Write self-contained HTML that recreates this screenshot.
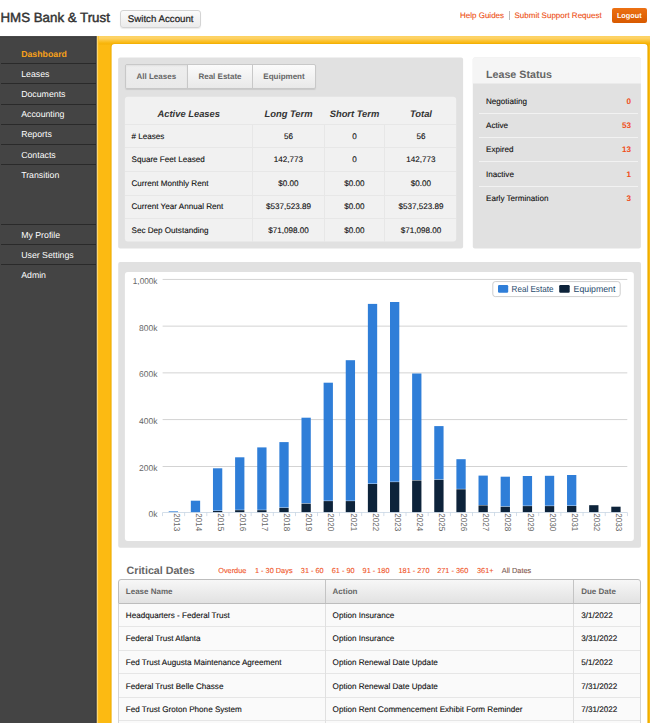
<!DOCTYPE html>
<html><head><meta charset="utf-8">
<style>
*{box-sizing:border-box;margin:0;padding:0}
html,body{width:650px;height:723px;overflow:hidden;background:#fff}
body{font-family:"Liberation Sans",sans-serif;font-size:8.1px;color:#111;position:relative;text-rendering:geometricPrecision}
.abs{position:absolute}
#title{left:0.5px;top:7.8px;font-size:13.3px;line-height:20px;color:#333;white-space:nowrap;-webkit-text-stroke:0.45px #333}
#switch{left:120px;top:10px;width:81.3px;height:18px;overflow:hidden;border:1px solid #d4d4d4;border-radius:3px;background:linear-gradient(#fbfbfb,#ebebeb);font-size:9.7px;line-height:17.8px;text-align:center;color:#222;-webkit-text-stroke:0.2px #222;box-shadow:0 1px 1px rgba(0,0,0,.08)}
.toplink{top:9.8px;line-height:12px;font-size:8px;color:#ee4f14;white-space:nowrap;-webkit-text-stroke:0.12px #ee4f14}
#logout{left:611.5px;top:8px;width:35.5px;height:14.5px;border-radius:2px;background:linear-gradient(#ec7013,#d85a00);color:#fff;font-weight:bold;font-size:7.3px;line-height:16.2px;text-align:center;overflow:hidden}
#side{left:0;top:36.4px;width:97px;height:687px;background:#444;border-right:1px solid #383838;border-top:1px solid #3a3a3a}
#yellow{left:97px;top:36px;width:553px;height:687px;background:#fcba12}
#ytop{left:97px;top:36px;width:553px;height:8.5px;background:linear-gradient(#fdd66c,#fdd062 30%,#fcc63c 50%,#f9b810 80%,#f5b005)}
#yleft{left:97px;top:36px;width:2px;height:687px;background:linear-gradient(90deg,#fdd56a,#fcc12c)}

.nav{left:0;width:97px;height:20.2px;line-height:20.2px;padding-left:21.2px;font-size:8.75px;color:#fff}
.nl{left:1px;width:95px;height:1px;background:#2a2a2a}
.nav.on{color:#f7a11a;font-weight:bold}
.gbox{background:#e1e1e1;border-radius:2px}
#tabs{left:125.3px;top:64px;width:190.4px;height:24.5px;border:1px solid #c8c8c8;border-radius:2px;background:linear-gradient(#fbfbfb,#e9e9e9);box-shadow:0 1px 1px rgba(0,0,0,.1)}
.tab{top:64.9px;height:24px;line-height:24px;font-size:8px;font-weight:bold;color:#666;text-align:center;white-space:nowrap}
.tdiv{top:65px;width:1px;height:22.5px;background:#c8c8c8}
#ltab{left:125px;top:97px;width:331px;height:145px;background:#f1f1f1;border-radius:3px}
.lh{top:97px;height:28px;line-height:33px;font-size:9.4px;font-weight:bold;font-style:italic;color:#333;text-align:center;white-space:nowrap}
.lr{height:23.4px;line-height:23.4px;white-space:nowrap;color:#111;font-size:8.1px;-webkit-text-stroke:0.12px #111}
.c{text-align:center}
.hl{left:125px;width:331px;height:1px;background:#e7e7e7}
.vl{top:125px;width:1px;height:116.5px;background:#e7e7e7}
#lshead{left:473px;top:57.5px;width:168px;height:26px;background:#f5f5f5;border-radius:2px 2px 0 0}
#lstitle{left:486px;top:64.8px;line-height:20px;font-size:10.7px;font-weight:bold;color:#666;white-space:nowrap}
.sl{left:486px;height:24.3px;line-height:24.3px;white-space:nowrap;font-size:8.1px;color:#111;-webkit-text-stroke:0.12px #111}
.sn{left:600px;width:31px;text-align:right;height:24.3px;line-height:24.3px;font-weight:bold;color:#f04e1a;font-size:8.1px}
.sh{left:479px;width:158.5px;height:1px;background:#f2f2f2}
#chartw{left:125px;top:272px;width:508.8px;height:269px;background:#fff;border-radius:3px}
#cdt{left:126.5px;top:561px;line-height:21px;font-size:10.7px;font-weight:bold;color:#666;white-space:nowrap}
.fl{top:564.5px;line-height:12px;font-size:7.35px;color:#f0531f;white-space:nowrap;-webkit-text-stroke:0.1px #f0531f}
#cdh{left:118px;top:579px;width:523px;height:24.5px;border:1px solid #bdbdbd;border-radius:3px 3px 0 0;background:linear-gradient(#f7f7f7,#e2e2e2)}
.ch{top:579.9px;height:24.5px;line-height:24.5px;font-size:8px;font-weight:bold;color:#666;white-space:nowrap}
#cdb{left:118px;top:603.5px;width:523px;height:125px;background:#fafafa;border-left:1px solid #d4d4d4;border-right:1px solid #d4d4d4}
.cr{height:23.55px;line-height:23.55px;white-space:nowrap;font-size:8.1px;color:#111;-webkit-text-stroke:0.12px #111}
.chl{left:119px;width:521px;height:1px;background:#e6e6e6}
.cvl{top:603.5px;width:1px;height:125px;background:#e0e0e0}
</style></head><body>
<div class="abs" id="title">HMS Bank &amp; Trust</div>
<div class="abs" id="switch">Switch Account</div>
<div class="abs toplink" style="left:460px">Help Guides</div>
<div class="abs" style="left:509px;top:11px;width:1px;height:9px;background:#bbb"></div>
<div class="abs toplink" style="left:514.5px">Submit Support Request</div>
<div class="abs" id="logout">Logout</div>
<svg class="abs" style="left:0;top:0" width="650" height="723" viewBox="0 0 650 723"><defs><linearGradient id="yg" x1="0" y1="0" x2="0" y2="1"><stop offset="0" stop-color="#fdd66c"/><stop offset="0.3" stop-color="#fdd062"/><stop offset="0.5" stop-color="#fcc63c"/><stop offset="0.8" stop-color="#f9b810"/><stop offset="1" stop-color="#f5b005"/></linearGradient><linearGradient id="yl" x1="0" y1="0" x2="1" y2="0"><stop offset="0" stop-color="#ffedb8"/><stop offset="1" stop-color="#fcba12"/></linearGradient></defs><rect x="96.5" y="36.2" width="560" height="700" fill="#fcba12"/><rect x="96.5" y="36.2" width="560" height="8.3" fill="url(#yg)"/><rect x="96.5" y="36.2" width="2.2" height="700" fill="url(#yl)"/><rect x="0" y="36.3" width="96.5" height="700" fill="#444"/><rect x="0" y="36.3" width="96.5" height="0.9" fill="#363636"/><rect x="95.5" y="36.3" width="1" height="700" fill="#34363c"/><rect x="110.5" y="43.4" width="538.5" height="700" rx="3.6" fill="#efae00"/><rect x="111.6" y="44.1" width="535.8" height="700" rx="3" fill="#fff"/><rect x="118.15" y="57.5" width="344.95" height="191.1" rx="2" fill="#e1e1e1"/><rect x="472.8" y="57.5" width="168.1" height="191.1" rx="2" fill="#e1e1e1"/><path d="M472.8 83.5V59.5a2 2 0 0 1 2-2h164.1a2 2 0 0 1 2 2V83.5z" fill="#f5f5f5"/><rect x="118.2" y="262.1" width="522.8" height="285.6" rx="2" fill="#e1e1e1"/><rect x="124.9" y="96.8" width="331.3" height="144.7" rx="3" fill="#f1f1f1"/><rect x="124.9" y="272" width="508.95" height="268.9" rx="3" fill="#fff"/></svg>
<div class="abs nav on" style="top:43.5px">Dashboard</div>
<div class="abs nav " style="top:63.7px">Leases</div>
<div class="abs nav " style="top:83.9px">Documents</div>
<div class="abs nav " style="top:104.1px">Accounting</div>
<div class="abs nav " style="top:124.3px">Reports</div>
<div class="abs nav " style="top:144.5px">Contacts</div>
<div class="abs nav " style="top:164.7px">Transition</div>
<div class="abs nav " style="top:224.5px">My Profile</div>
<div class="abs nav " style="top:244.7px">User Settings</div>
<div class="abs nav " style="top:264.9px">Admin</div>
<div class="abs nl" style="top:63px"></div>
<div class="abs nl" style="top:83px"></div>
<div class="abs nl" style="top:104px"></div>
<div class="abs nl" style="top:124px"></div>
<div class="abs nl" style="top:144px"></div>
<div class="abs nl" style="top:164px"></div>
<div class="abs nl" style="top:224px"></div>
<div class="abs nl" style="top:244px"></div>
<div class="abs nl" style="top:264px"></div>
<div class="abs" id="tabs"></div>
<div class="abs" style="left:126.3px;top:65px;width:61px;height:22.5px;background:linear-gradient(#eeeeee,#e9e9e9);box-shadow:inset 0 1px 2px rgba(0,0,0,.06)"></div>
<div class="abs tdiv" style="left:187px"></div><div class="abs tdiv" style="left:252px"></div>
<div class="abs tab" style="left:125.3px;width:62px">All Leases</div>
<div class="abs tab" style="left:187.5px;width:65px">Real Estate</div>
<div class="abs tab" style="left:252.5px;width:63px">Equipment</div>
<div class="abs lh" style="left:125px;width:127.5px">Active Leases</div>
<div class="abs lh" style="left:252.5px;width:72px">Long Term</div>
<div class="abs lh" style="left:324.5px;width:60px">Short Term</div>
<div class="abs lh" style="left:385.2px;width:71.5px">Total</div>
<div class="abs hl" style="top:124px"></div>
<div class="abs lr" style="left:131.5px;top:124.6px"># Leases</div>
<div class="abs lr c" style="left:252.5px;width:72px;top:124.6px">56</div>
<div class="abs lr c" style="left:324.5px;width:60px;top:124.6px">0</div>
<div class="abs lr c" style="left:385.2px;width:71.5px;top:124.6px">56</div>
<div class="abs hl" style="top:147px"></div>
<div class="abs lr" style="left:131.5px;top:148.1px">Square Feet Leased</div>
<div class="abs lr c" style="left:252.5px;width:72px;top:148.1px">142,773</div>
<div class="abs lr c" style="left:324.5px;width:60px;top:148.1px">0</div>
<div class="abs lr c" style="left:385.2px;width:71.5px;top:148.1px">142,773</div>
<div class="abs hl" style="top:171px"></div>
<div class="abs lr" style="left:131.5px;top:171.7px">Current Monthly Rent</div>
<div class="abs lr c" style="left:252.5px;width:72px;top:171.7px">$0.00</div>
<div class="abs lr c" style="left:324.5px;width:60px;top:171.7px">$0.00</div>
<div class="abs lr c" style="left:385.2px;width:71.5px;top:171.7px">$0.00</div>
<div class="abs hl" style="top:195px"></div>
<div class="abs lr" style="left:131.5px;top:195.2px">Current Year Annual Rent</div>
<div class="abs lr c" style="left:252.5px;width:72px;top:195.2px">$537,523.89</div>
<div class="abs lr c" style="left:324.5px;width:60px;top:195.2px">$0.00</div>
<div class="abs lr c" style="left:385.2px;width:71.5px;top:195.2px">$537,523.89</div>
<div class="abs hl" style="top:218px"></div>
<div class="abs lr" style="left:131.5px;top:218.8px">Sec Dep Outstanding</div>
<div class="abs lr c" style="left:252.5px;width:72px;top:218.8px">$71,098.00</div>
<div class="abs lr c" style="left:324.5px;width:60px;top:218.8px">$0.00</div>
<div class="abs lr c" style="left:385.2px;width:71.5px;top:218.8px">$71,098.00</div>
<div class="abs vl" style="left:252px"></div>
<div class="abs vl" style="left:324px"></div>
<div class="abs vl" style="left:384px"></div>
<div class="abs" id="lstitle">Lease Status</div>
<div class="abs sl" style="top:89.8px">Negotiating</div><div class="abs sn" style="top:89.8px">0</div>
<div class="abs sh" style="top:113px"></div>
<div class="abs sl" style="top:114.1px">Active</div><div class="abs sn" style="top:114.1px">53</div>
<div class="abs sh" style="top:137px"></div>
<div class="abs sl" style="top:138.4px">Expired</div><div class="abs sn" style="top:138.4px">13</div>
<div class="abs sh" style="top:161px"></div>
<div class="abs sl" style="top:162.8px">Inactive</div><div class="abs sn" style="top:162.8px">1</div>
<div class="abs sh" style="top:186px"></div>
<div class="abs sl" style="top:187.0px">Early Termination</div><div class="abs sn" style="top:187.0px">3</div>
<!--CHART--><svg class="abs" style="left:0;top:0" width="650" height="723" viewBox="0 0 650 723" font-family="Liberation Sans, sans-serif">
<rect x="162.6" y="278.95" width="464.7" height="0.7" fill="#c0c0c0"/>
<rect x="162.6" y="325.75" width="464.7" height="0.7" fill="#c0c0c0"/>
<rect x="162.6" y="372.55" width="464.7" height="0.7" fill="#c0c0c0"/>
<rect x="162.6" y="419.35" width="464.7" height="0.7" fill="#c0c0c0"/>
<rect x="162.6" y="466.05" width="464.7" height="0.7" fill="#c0c0c0"/>
<rect x="162.6" y="512.15" width="464.7" height="0.7" fill="#c0d0e0"/>
<rect x="162.25" y="512.5" width="0.7" height="3.6" fill="#c0d0e0"/>
<rect x="184.38" y="512.5" width="0.7" height="3.6" fill="#c0d0e0"/>
<rect x="206.51" y="512.5" width="0.7" height="3.6" fill="#c0d0e0"/>
<rect x="228.64" y="512.5" width="0.7" height="3.6" fill="#c0d0e0"/>
<rect x="250.76" y="512.5" width="0.7" height="3.6" fill="#c0d0e0"/>
<rect x="272.89" y="512.5" width="0.7" height="3.6" fill="#c0d0e0"/>
<rect x="295.02" y="512.5" width="0.7" height="3.6" fill="#c0d0e0"/>
<rect x="317.15" y="512.5" width="0.7" height="3.6" fill="#c0d0e0"/>
<rect x="339.28" y="512.5" width="0.7" height="3.6" fill="#c0d0e0"/>
<rect x="361.41" y="512.5" width="0.7" height="3.6" fill="#c0d0e0"/>
<rect x="383.54" y="512.5" width="0.7" height="3.6" fill="#c0d0e0"/>
<rect x="405.66" y="512.5" width="0.7" height="3.6" fill="#c0d0e0"/>
<rect x="427.79" y="512.5" width="0.7" height="3.6" fill="#c0d0e0"/>
<rect x="449.92" y="512.5" width="0.7" height="3.6" fill="#c0d0e0"/>
<rect x="472.05" y="512.5" width="0.7" height="3.6" fill="#c0d0e0"/>
<rect x="494.18" y="512.5" width="0.7" height="3.6" fill="#c0d0e0"/>
<rect x="516.31" y="512.5" width="0.7" height="3.6" fill="#c0d0e0"/>
<rect x="538.44" y="512.5" width="0.7" height="3.6" fill="#c0d0e0"/>
<rect x="560.56" y="512.5" width="0.7" height="3.6" fill="#c0d0e0"/>
<rect x="582.69" y="512.5" width="0.7" height="3.6" fill="#c0d0e0"/>
<rect x="604.82" y="512.5" width="0.7" height="3.6" fill="#c0d0e0"/>
<rect x="626.95" y="512.5" width="0.7" height="3.6" fill="#c0d0e0"/>
<text x="157.4" y="283.8" font-size="8.5" fill="#666" text-anchor="end" textLength="24.6" lengthAdjust="spacingAndGlyphs">1,000k</text>
<text x="157.4" y="330.6" font-size="8.5" fill="#666" text-anchor="end">800k</text>
<text x="157.4" y="377.4" font-size="8.5" fill="#666" text-anchor="end">600k</text>
<text x="157.4" y="424.2" font-size="8.5" fill="#666" text-anchor="end">400k</text>
<text x="157.4" y="470.9" font-size="8.5" fill="#666" text-anchor="end">200k</text>
<text x="157.4" y="517.0" font-size="8.5" fill="#666" text-anchor="end">0k</text>
<rect x="168.71" y="511.0" width="9.3" height="1.1" fill="#2f7ed8" fill-opacity="0.65"/>
<text transform="translate(173.56,513.2) rotate(90)" font-size="8.6" fill="#666" textLength="18" lengthAdjust="spacingAndGlyphs">2013</text>
<rect x="190.84" y="500.7" width="9.3" height="11.4" fill="#2f7ed8"/>
<text transform="translate(195.69,513.2) rotate(90)" font-size="8.6" fill="#666" textLength="18" lengthAdjust="spacingAndGlyphs">2014</text>
<rect x="212.97" y="468.3" width="9.3" height="42.3" fill="#2f7ed8"/>
<rect x="212.97" y="511.0" width="9.3" height="1.1" fill="#0d233a"/>
<text transform="translate(217.82,513.2) rotate(90)" font-size="8.6" fill="#666" textLength="18" lengthAdjust="spacingAndGlyphs">2015</text>
<rect x="235.10" y="457.3" width="9.3" height="52.5" fill="#2f7ed8"/>
<rect x="235.10" y="510.2" width="9.3" height="1.9" fill="#0d233a"/>
<text transform="translate(239.95,513.2) rotate(90)" font-size="8.6" fill="#666" textLength="18" lengthAdjust="spacingAndGlyphs">2016</text>
<rect x="257.23" y="447.4" width="9.3" height="62.4" fill="#2f7ed8"/>
<rect x="257.23" y="510.2" width="9.3" height="1.9" fill="#0d233a"/>
<text transform="translate(262.08,513.2) rotate(90)" font-size="8.6" fill="#666" textLength="18" lengthAdjust="spacingAndGlyphs">2017</text>
<rect x="279.36" y="442.1" width="9.3" height="65.4" fill="#2f7ed8"/>
<rect x="279.36" y="507.9" width="9.3" height="4.2" fill="#0d233a"/>
<text transform="translate(284.21,513.2) rotate(90)" font-size="8.6" fill="#666" textLength="18" lengthAdjust="spacingAndGlyphs">2018</text>
<rect x="301.49" y="417.7" width="9.3" height="85.6" fill="#2f7ed8"/>
<rect x="301.49" y="503.7" width="9.3" height="8.4" fill="#0d233a"/>
<text transform="translate(306.34,513.2) rotate(90)" font-size="8.6" fill="#666" textLength="18" lengthAdjust="spacingAndGlyphs">2019</text>
<rect x="323.61" y="382.7" width="9.3" height="118.0" fill="#2f7ed8"/>
<rect x="323.61" y="501.1" width="9.3" height="11.0" fill="#0d233a"/>
<text transform="translate(328.46,513.2) rotate(90)" font-size="8.6" fill="#666" textLength="18" lengthAdjust="spacingAndGlyphs">2020</text>
<rect x="345.74" y="360.2" width="9.3" height="140.5" fill="#2f7ed8"/>
<rect x="345.74" y="501.1" width="9.3" height="11.0" fill="#0d233a"/>
<text transform="translate(350.59,513.2) rotate(90)" font-size="8.6" fill="#666" textLength="18" lengthAdjust="spacingAndGlyphs">2021</text>
<rect x="367.87" y="303.9" width="9.3" height="179.7" fill="#2f7ed8"/>
<rect x="367.87" y="484.0" width="9.3" height="28.1" fill="#0d233a"/>
<text transform="translate(372.72,513.2) rotate(90)" font-size="8.6" fill="#666" textLength="18" lengthAdjust="spacingAndGlyphs">2022</text>
<rect x="390.00" y="302.0" width="9.3" height="179.7" fill="#2f7ed8"/>
<rect x="390.00" y="482.1" width="9.3" height="30.0" fill="#0d233a"/>
<text transform="translate(394.85,513.2) rotate(90)" font-size="8.6" fill="#666" textLength="18" lengthAdjust="spacingAndGlyphs">2023</text>
<rect x="412.13" y="373.5" width="9.3" height="106.6" fill="#2f7ed8"/>
<rect x="412.13" y="480.5" width="9.3" height="31.6" fill="#0d233a"/>
<text transform="translate(416.98,513.2) rotate(90)" font-size="8.6" fill="#666" textLength="18" lengthAdjust="spacingAndGlyphs">2024</text>
<rect x="434.26" y="426.1" width="9.3" height="53.3" fill="#2f7ed8"/>
<rect x="434.26" y="479.8" width="9.3" height="32.3" fill="#0d233a"/>
<text transform="translate(439.11,513.2) rotate(90)" font-size="8.6" fill="#666" textLength="18" lengthAdjust="spacingAndGlyphs">2025</text>
<rect x="456.39" y="459.2" width="9.3" height="29.7" fill="#2f7ed8"/>
<rect x="456.39" y="489.3" width="9.3" height="22.8" fill="#0d233a"/>
<text transform="translate(461.24,513.2) rotate(90)" font-size="8.6" fill="#666" textLength="18" lengthAdjust="spacingAndGlyphs">2026</text>
<rect x="478.51" y="475.6" width="9.3" height="29.4" fill="#2f7ed8"/>
<rect x="478.51" y="505.4" width="9.3" height="6.7" fill="#0d233a"/>
<text transform="translate(483.36,513.2) rotate(90)" font-size="8.6" fill="#666" textLength="18" lengthAdjust="spacingAndGlyphs">2027</text>
<rect x="500.64" y="476.7" width="9.3" height="29.7" fill="#2f7ed8"/>
<rect x="500.64" y="506.8" width="9.3" height="5.3" fill="#0d233a"/>
<text transform="translate(505.49,513.2) rotate(90)" font-size="8.6" fill="#666" textLength="18" lengthAdjust="spacingAndGlyphs">2028</text>
<rect x="522.77" y="476.0" width="9.3" height="29.7" fill="#2f7ed8"/>
<rect x="522.77" y="506.1" width="9.3" height="6.0" fill="#0d233a"/>
<text transform="translate(527.62,513.2) rotate(90)" font-size="8.6" fill="#666" textLength="18" lengthAdjust="spacingAndGlyphs">2029</text>
<rect x="544.90" y="475.8" width="9.3" height="29.9" fill="#2f7ed8"/>
<rect x="544.90" y="506.1" width="9.3" height="6.0" fill="#0d233a"/>
<text transform="translate(549.75,513.2) rotate(90)" font-size="8.6" fill="#666" textLength="18" lengthAdjust="spacingAndGlyphs">2030</text>
<rect x="567.03" y="475.0" width="9.3" height="30.6" fill="#2f7ed8"/>
<rect x="567.03" y="506.0" width="9.3" height="6.1" fill="#0d233a"/>
<text transform="translate(571.88,513.2) rotate(90)" font-size="8.6" fill="#666" textLength="18" lengthAdjust="spacingAndGlyphs">2031</text>
<rect x="589.16" y="505.2" width="9.3" height="6.9" fill="#0d233a"/>
<text transform="translate(594.01,513.2) rotate(90)" font-size="8.6" fill="#666" textLength="18" lengthAdjust="spacingAndGlyphs">2032</text>
<rect x="611.29" y="506.7" width="9.3" height="5.4" fill="#0d233a"/>
<text transform="translate(616.14,513.2) rotate(90)" font-size="8.6" fill="#666" textLength="18" lengthAdjust="spacingAndGlyphs">2033</text>
<rect x="492.8" y="281.6" width="127.4" height="15" rx="2.5" fill="#fff" stroke="#c2c2c2" stroke-width="0.8"/>
<rect x="498" y="285.1" width="10.2" height="7.6" rx="1.2" fill="#2f7ed8"/>
<text x="511.6" y="292.0" font-size="8.9" fill="#274b6d" textLength="41.8" lengthAdjust="spacingAndGlyphs">Real Estate</text>
<rect x="559.2" y="285.1" width="10.5" height="7.6" rx="1.2" fill="#0d233a"/>
<text x="573.6" y="292.0" font-size="8.9" fill="#274b6d" textLength="41.8" lengthAdjust="spacingAndGlyphs">Equipment</text>
</svg><!--/CHART-->
<div class="abs" id="cdt">Critical Dates</div>
<div class="abs fl" style="left:218.2px">Overdue</div>
<div class="abs fl" style="left:255px">1 - 30 Days</div>
<div class="abs fl" style="left:300.8px">31 - 60</div>
<div class="abs fl" style="left:331.7px">61 - 90</div>
<div class="abs fl" style="left:362.6px">91 - 180</div>
<div class="abs fl" style="left:398.5px">181 - 270</div>
<div class="abs fl" style="left:437.2px">271 - 360</div>
<div class="abs fl" style="left:477px">361+</div>
<div class="abs fl" style="left:501.8px;color:#555">All Dates</div>
<div class="abs" id="cdh"></div>
<div class="abs ch" style="left:125.8px">Lease Name</div>
<div class="abs ch" style="left:332.6px">Action</div>
<div class="abs ch" style="left:581.2px">Due Date</div>
<div class="abs" style="left:325px;top:580px;width:1px;height:23px;background:#c4c4c4"></div><div class="abs" style="left:573px;top:580px;width:1px;height:23px;background:#c4c4c4"></div>
<div class="abs" id="cdb"></div>
<div class="abs cr" style="left:125.8px;top:603.90px">Headquarters - Federal Trust</div>
<div class="abs cr" style="left:332.6px;top:603.90px">Option Insurance</div>
<div class="abs cr" style="left:581.2px;top:603.90px">3/1/2022</div>
<div class="abs chl" style="top:626.1px"></div>
<div class="abs cr" style="left:125.8px;top:627.45px">Federal Trust Atlanta</div>
<div class="abs cr" style="left:332.6px;top:627.45px">Option Insurance</div>
<div class="abs cr" style="left:581.2px;top:627.45px">3/31/2022</div>
<div class="abs chl" style="top:649.6px"></div>
<div class="abs cr" style="left:125.8px;top:651.00px">Fed Trust Augusta Maintenance Agreement</div>
<div class="abs cr" style="left:332.6px;top:651.00px">Option Renewal Date Update</div>
<div class="abs cr" style="left:581.2px;top:651.00px">5/1/2022</div>
<div class="abs chl" style="top:673.2px"></div>
<div class="abs cr" style="left:125.8px;top:674.55px">Federal Trust Belle Chasse</div>
<div class="abs cr" style="left:332.6px;top:674.55px">Option Renewal Date Update</div>
<div class="abs cr" style="left:581.2px;top:674.55px">7/31/2022</div>
<div class="abs chl" style="top:696.7px"></div>
<div class="abs cr" style="left:125.8px;top:698.10px">Fed Trust Groton Phone System</div>
<div class="abs cr" style="left:332.6px;top:698.10px">Option Rent Commencement Exhibit Form Reminder</div>
<div class="abs cr" style="left:581.2px;top:698.10px">7/31/2022</div>
<div class="abs chl" style="top:720.3px"></div>
<div class="abs cvl" style="left:325px"></div><div class="abs cvl" style="left:573px"></div>
</body></html>
